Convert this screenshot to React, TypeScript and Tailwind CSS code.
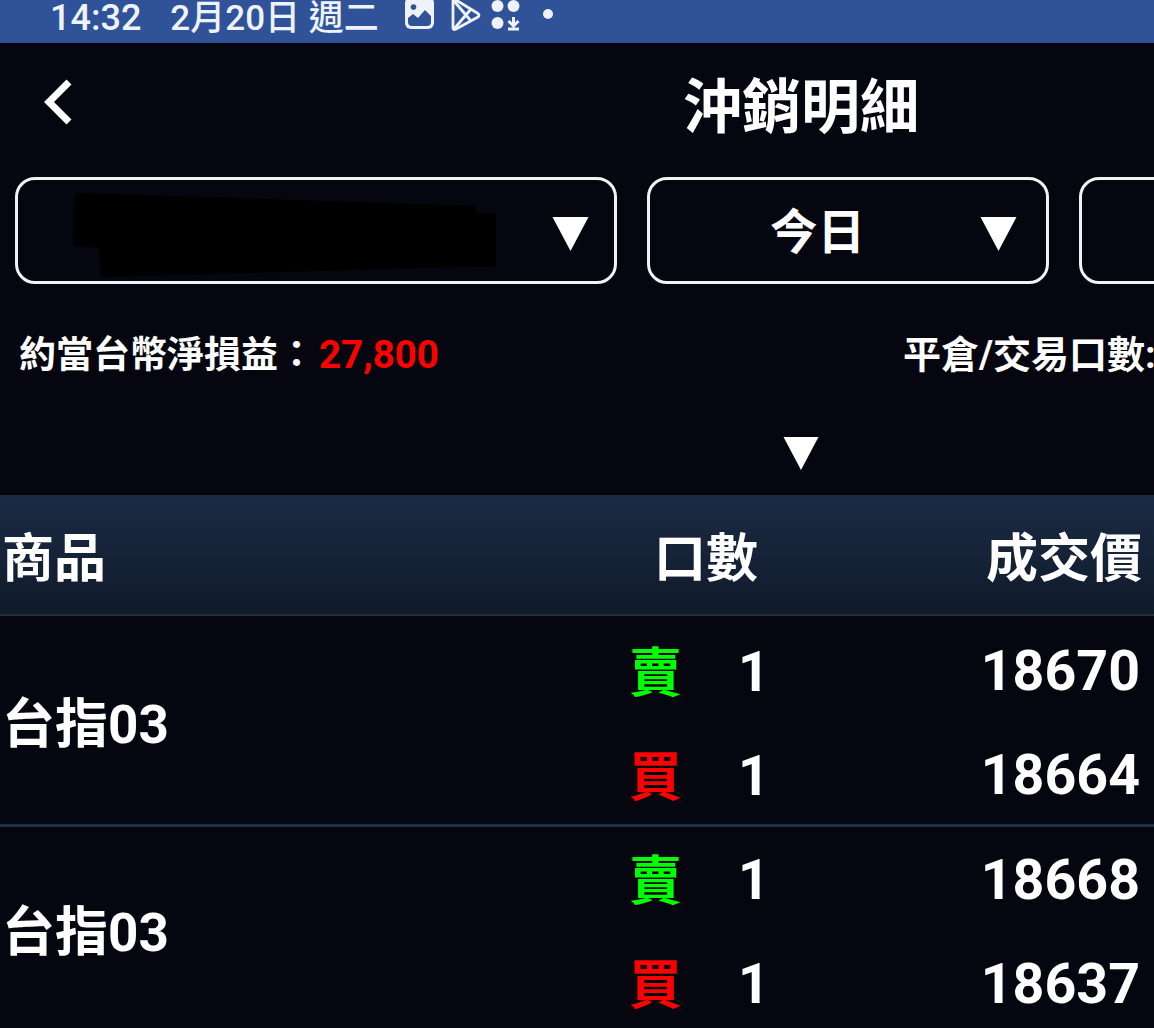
const cjk = '[font-family:Roboto,"Noto_Sans_CJK_TC",sans-serif]';

function Triangle({ className }: { className: string }) {
  return (
    <svg viewBox="0 0 36 34" className={className}>
      <polygon points="0,0 36,0 18,34" fill="#fff" />
    </svg>
  );
}

function StatusIcons() {
  return (
    <div className="flex items-start self-start">
      {/* gallery */}
      <svg viewBox="0 0 29 29" className="w-[29px] h-[29px] ml-[26px]">
        <rect x="0" y="-3" width="29" height="32" rx="6" fill="#eef2fa" />
        <path d="M3 18 L3 22 Q3 26 7 26 L22 26 Q26 26 26 22 L26 16 L20 10 L13 18 L8 14 Z" fill="#2f5299" />
        <circle cx="8.500" cy="7" r="2.800" fill="#2f5299" />
      </svg>
      {/* play store */}
      <svg viewBox="0 0 30 31" fill="none" className="w-[30px] h-[31px] ml-[17px]" stroke="#eef2fa" strokeWidth="2.800" strokeLinejoin="round">
        <path d="M2 1 L2 28 Q2 30.500 5 29 L27 17 Q29 15 27 13.500 L5 0 Q2 -1 2 1 Z" />
        <path d="M3 1 L20 21 M3 29 L20 9" />
      </svg>
      {/* dots with download arrow */}
      <svg viewBox="0 0 30 31" className="w-[30px] h-[31px] ml-[10px]">
        <circle cx="6.500" cy="6" r="6" fill="#eef2fa" />
        <circle cx="22.500" cy="6" r="6" fill="#eef2fa" />
        <circle cx="6.500" cy="23" r="6" fill="#eef2fa" />
        <path d="M22.500 17 L22.500 26 M17.500 21 L22.500 26 L27.500 21 M17 29 L28 29" stroke="#eef2fa" strokeWidth="3" fill="none" />
      </svg>
      <div className="w-[10px] h-[10px] rounded-full bg-[#eef2fa] ml-[22px] mt-[9px]" />
    </div>
  );
}

function Row({ rows }: { rows: { side: string; qty: string; price: string }[] }) {
  return (
    <div className="flex h-[207px] items-center border-b-[3px] border-[#1f3044] last:border-b-0">
      <div className="w-[620px] pl-[2px] pt-[6px] text-[53px] font-bold text-white leading-none">台指03</div>
      <div className="flex-1 flex flex-col gap-[44px] pr-[14px] pt-[4px]">
        {rows.map((r) => (
          <div key={r.price} className="flex items-center h-[60px]">
            <span className={`w-[50px] ml-[9px] mr-[1px] mt-[4px] text-[53px] font-bold leading-none ${r.side === '賣' ? 'text-[#00ff00]' : 'text-[#ff0000]'}`}>{r.side}</span>
            <span className="ml-[58px] text-[55px] font-bold leading-none text-white">{r.qty}</span>
            <span className="ml-auto text-[55.500px] font-bold leading-none text-white">{r.price}</span>
          </div>
        ))}
      </div>
    </div>
  );
}

export default function App() {
  return (
    <div className={`w-[1154px] h-[1028px] overflow-hidden bg-[#05060f] ${cjk}`}>
      {/* Status bar */}
      <div className="h-[43px] bg-[#2f5299] flex items-center pl-[50px] pb-[7px] text-[#eef2fa] text-[36px] font-medium leading-none whitespace-nowrap">
        <span>14:32</span>
        <span className="ml-[29px] text-[35px]">2月20日 週二</span>
        <StatusIcons />
      </div>

      <div className="w-[1602px]">
        {/* Header */}
        <div className="relative h-[135px] flex items-center justify-center pb-[7px]">
          <svg viewBox="0 0 30 46" fill="none" className="absolute left-[43px] top-[36px] w-[30px] h-[46px]">
            <path d="M26 3 L6 23 L26 43" stroke="#fff" strokeWidth="7" />
          </svg>
          <h1 className="text-[59px] font-bold text-white leading-none">沖銷明細</h1>
        </div>

        {/* Filters */}
        <div className="flex gap-[30px] pl-[15px] h-[107px] mt-[-1px]">
          <div className="relative w-[602px] rounded-[20px] border-[3px] border-[#f2f2f2] flex items-center justify-end pr-[25px] pt-[6px]">
            <svg viewBox="0 0 424 84" className="absolute left-[55px] top-[13px] w-[424px] h-[84px]">
              <polygon points="2,0 403,13 403,20 423,20 423,73 28,84 26,55 0,52" fill="#000" />
            </svg>
            <Triangle className="w-[37px] h-[34px]" />
          </div>
          <div className="relative w-[402px] rounded-[20px] border-[3px] border-[#f2f2f2] flex items-center justify-end pr-[29px] pt-[6px]">
            <span className="absolute left-[120px] top-[30px] text-[47.500px] font-bold leading-none text-white">今日</span>
            <Triangle className="w-[37px] h-[34px]" />
          </div>
          <div className="w-[402px] rounded-[20px] border-[3px] border-[#f2f2f2]" />
        </div>

        {/* Summary */}
        <div className="flex items-center h-[72px] mt-[35px] pl-[19px] text-[37px] font-bold text-white leading-none whitespace-nowrap">
          <span>約當台幣淨損益：</span>
          <span className="text-[#ff0000] text-[38.500px] ml-[4px]">27,800</span>
          <span className="ml-[464px] text-[38px]">平倉/交易口數:1</span>
        </div>

        {/* Expand */}
        <div className="flex justify-center h-[104px] pt-[46px]">
          <Triangle className="w-[38px] h-[33px]" />
        </div>
      </div>

      {/* Table header */}
      <div className="h-[121px] flex items-center pt-[9px] bg-gradient-to-b from-[#1b2b45] to-[#101a2a] border-t border-b-[2px] border-t-[#1a2a40] border-b-[#1f3044] text-[52px] font-bold text-white leading-none">
        <span className="w-[654px] pl-[2px]">商品</span>
        <span>口數</span>
        <span className="ml-auto pr-[12px]">成交價</span>
      </div>

      <div className="pt-[4px]">
        <Row rows={[{ side: '賣', qty: '1', price: '18670' }, { side: '買', qty: '1', price: '18664' }]} />
        <Row rows={[{ side: '賣', qty: '1', price: '18668' }, { side: '買', qty: '1', price: '18637' }]} />
      </div>
    </div>
  );
}
